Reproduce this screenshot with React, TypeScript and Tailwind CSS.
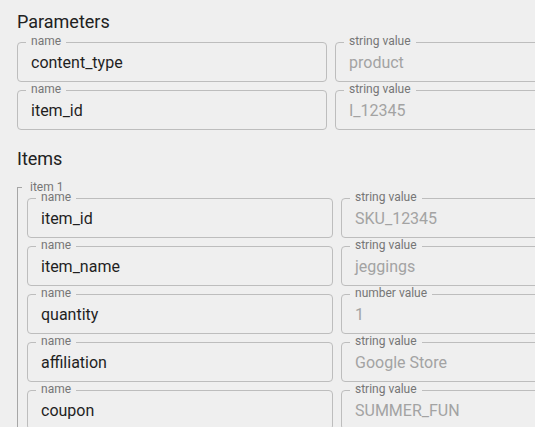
import React from 'react';

type Row = { name: string; kind: string; value: string };

const params: Row[] = [
  { name: 'content_type', kind: 'string value', value: 'product' },
  { name: 'item_id', kind: 'string value', value: 'I_12345' },
];

const itemRows: Row[] = [
  { name: 'item_id', kind: 'string value', value: 'SKU_12345' },
  { name: 'item_name', kind: 'string value', value: 'jeggings' },
  { name: 'quantity', kind: 'number value', value: '1' },
  { name: 'affiliation', kind: 'string value', value: 'Google Store' },
  { name: 'coupon', kind: 'string value', value: 'SUMMER_FUN' },
];

function Field({ label, value, muted, className = '' }: { label: string; value: string; muted?: boolean; className?: string }) {
  return (
    <div className={`relative h-10 rounded border border-[#bdbdbd] flex items-center pl-[13px] ${className}`}>
      <span className="absolute left-[8px] -top-[7px] px-[5px] bg-[#efefef] text-[12px] leading-[10px] text-[#767676]">
        {label}
      </span>
      <span className={`text-[16px] leading-[23px] ${muted ? 'text-[#a3a3a3]' : 'text-[#1f1f1f]'}`}>{value}</span>
    </div>
  );
}

function FieldRow({ row, nameWidth }: { row: Row; nameWidth: string }) {
  return (
    <div className="flex gap-2">
      <Field label="name" value={row.name} className={nameWidth} />
      <Field label={row.kind} value={row.value} muted className="flex-1" />
    </div>
  );
}

export default function App() {
  return (
    <div className="w-[535px] h-[427px] overflow-hidden bg-[#efefef] font-['Roboto','Liberation_Sans',sans-serif]">
      <div className="w-[900px] pl-[17px] pt-2">
        <h2 className="text-[18px] leading-[27px] text-[#212121]">Parameters</h2>
        <div className="mt-[7px] flex flex-col gap-2">
          {params.map((r) => (
            <FieldRow key={r.name} row={r} nameWidth="w-[310px]" />
          ))}
        </div>

        <h2 className="mt-[15px] text-[18px] leading-[27px] text-[#212121]">Items</h2>
        <div className="relative mt-[15px] border-l border-[#a6a6a6] pl-[9px] pt-[11px] pb-4">
          <span className="absolute -left-px top-0 w-[5px] h-px bg-[#a6a6a6]" />
          <span className="absolute left-[12px] -top-[5px] text-[12px] leading-[10px] text-[#767676]">item 1</span>
          <div className="flex flex-col gap-2">
            {itemRows.map((r) => (
              <FieldRow key={r.name} row={r} nameWidth="w-[306px]" />
            ))}
          </div>
        </div>
      </div>
    </div>
  );
}
